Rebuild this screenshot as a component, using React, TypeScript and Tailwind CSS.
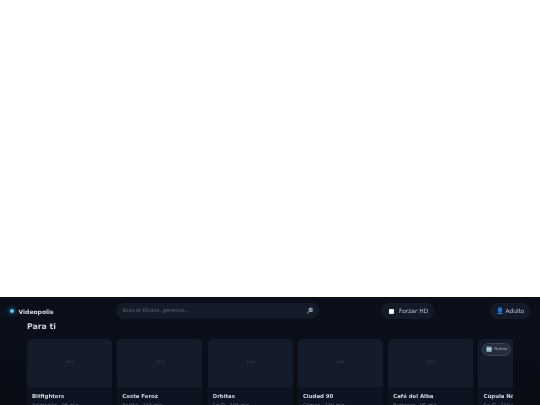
const cards = [
  { title: "Bitfighters", meta: "Animación · 98 min" },
  { title: "Costa Feroz", meta: "Acción · 112 min" },
  { title: "Orbitas", meta: "Sci-Fi · 104 min" },
  { title: "Ciudad 90", meta: "Crimen · 120 min" },
  { title: "Café del Alba", meta: "Romance · 95 min" },
  { title: "Cúpula Nova", meta: "Sci-Fi · 110 min", badge: true },
]

export default function App() {
  return (
    <div className="h-[405px] overflow-hidden bg-white font-['DejaVu_Sans',sans-serif] antialiased">
      <div className="h-[297px]" />
      <div className="h-[108px] overflow-hidden bg-gradient-to-b from-[#0a0f1a] to-[#090d16] will-change-transform">
        <header className="flex h-[28px] items-center justify-between pl-[10px] pr-[10px]">
          <div className="flex w-[106px] items-center gap-[4.5px]">
            <span className="h-[4px] w-[4px] rounded-full bg-[#5cc8f5] shadow-[0_0_5px_#5cc8f5]" />
            <span className="text-[6px] font-bold text-[#d5dbe5]">Videopolis</span>
          </div>
          <div className="flex h-[16px] w-[203px] items-center justify-between rounded-full bg-[#141a27] pl-[7px] pr-[6px]">
            <span className="text-[5.3px] text-[#5a6373]">Buscar títulos, géneros...</span>
            <span className="text-[6px] leading-none">🔎</span>
          </div>
          <div className="ml-[62px] flex h-[16px] w-[53px] items-center gap-[5px] rounded-full bg-[#141a27] pl-[8px]">
            <span className="h-[5px] w-[5px] rounded-[1px] bg-white" />
            <span className="pt-[1px] text-[5.9px] text-[#bcc4d0]">Forzar HD</span>
          </div>
          <div className="ml-auto flex h-[16px] w-[40px] items-center justify-center gap-[2px] rounded-full bg-[#141a27]">
            <span className="text-[6.5px] leading-none">👤</span>
            <span className="pt-[1px] text-[5.9px] text-[#bcc4d0]">Adulto</span>
          </div>
        </header>
        <section className="pl-[27px]">
          <h2 className="-mt-[4px] text-[7.8px] leading-[11px] font-bold text-[#d0d6e0]">Para ti</h2>
          <div className="mt-[7px] flex w-[486px] gap-[5.3px] overflow-hidden">
            {cards.map((c) => (
              <article key={c.title} className="w-[85px] shrink-0 overflow-hidden rounded-[5px] bg-[#0d1320]">
                <div className="relative flex h-[48px] items-center justify-center bg-[#141c2c]">
                  {c.badge ? (
                    <span className="absolute left-[4px] top-[4px] flex h-[13px] w-[29px] items-center justify-center gap-[2px] rounded-full border-[0.5px] border-[#3a4353] bg-[#262d3b] text-[4.2px] text-[#aab2c0]">
                      <span className="text-[5px] leading-none">🆕</span>
                      Nuevo
                    </span>
                  ) : (
                    <span className="text-[3.5px] text-[#3a4556]">16:9</span>
                  )}
                </div>
                <div className="px-[5px] pt-[5px]">
                  <div className="truncate text-[5.4px] leading-[8px] font-bold text-[#d0d6e0]">{c.title}</div>
                  <div className="mt-[2px] truncate text-[4.8px] leading-[7px] text-[#7c8596]">{c.meta}</div>
                </div>
              </article>
            ))}
          </div>
        </section>
      </div>
    </div>
  )
}
